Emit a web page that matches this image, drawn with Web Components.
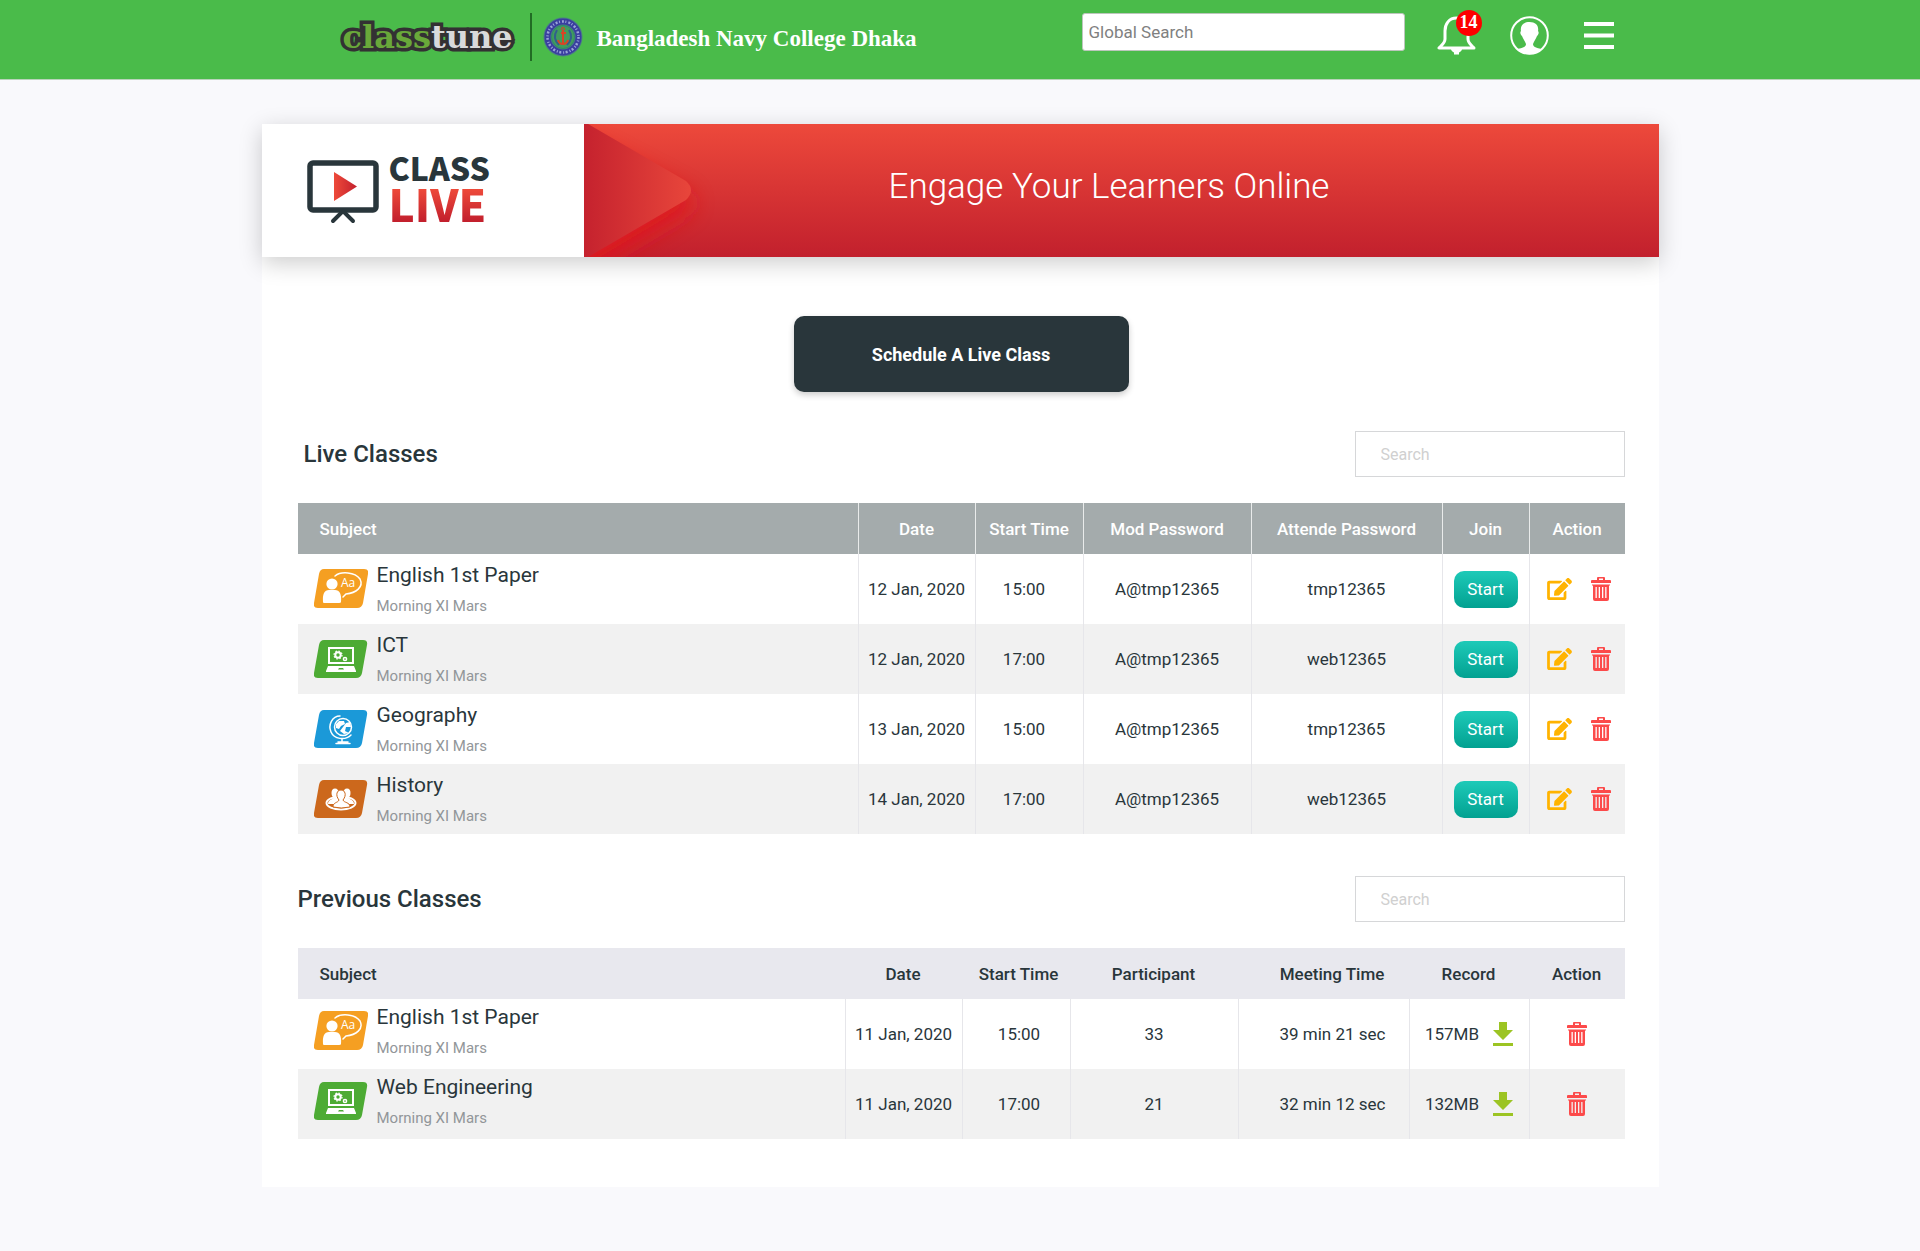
<!DOCTYPE html>
<html lang="en">
<head>
<meta charset="utf-8">
<meta name="viewport" content="width=device-width, initial-scale=1">
<title>Class Live</title>
<style>
  body {
    margin: 0;
    min-height: 100vh;
    background: #f9f9fc;
    color: #29363b;
    font-family: Roboto, "Liberation Sans", sans-serif;
    font-size: 16px;
  }
</style>
</head>
<body>
<site-header college="Bangladesh Navy College Dhaka" notifications="14"></site-header>
<page-panel>
  <live-banner slot="banner">Engage Your Learners Online</live-banner>
  <schedule-button>Schedule A Live Class</schedule-button>
  <class-section heading="Live Classes" kind="live"></class-section>
  <class-section heading="Previous Classes" kind="previous"></class-section>
</page-panel>

<script>
const define = (name, render) => customElements.define(name, class extends HTMLElement {
  connectedCallback() {
    if (this.shadowRoot) return;
    const template = document.createElement('template');
    template.innerHTML = render(this);
    this.attachShadow({ mode: 'open' }).append(template.content.cloneNode(true));
  }
});

const subjectGlyphs = {
  english: `<path fill="#f59f22" d="M10 0H50Q55 0 54 5L49 34Q48 39 43 39H4Q-1 39 0 34L5 5Q6 0 10 0Z"/>
    <g fill="#fff"><circle cx="18" cy="15" r="5.600"/><path d="M9 33q-1-12 6-12h6q7 0 6 12q0 1-2 1H10q-1 0-1-1Z"/></g>
    <path fill="none" stroke="#fff" stroke-width="1.500" stroke-linecap="round" d="M21 7C27 2 41 3 46 10c4 8-4 14-14 15l-3 3"/>
    <text x="27" y="18" font-family="Open Sans, sans-serif" font-size="12" fill="#fff">Aa</text>`,
  laptop: `<path fill="#4dab34" d="M10 1H49Q54 1 53 6L48 34Q47 39 42 39H4Q-1 39 0 34L5 6Q6 1 10 1Z"/>
    <path d="M15 9h24v15H15Z" fill="none" stroke="#fff" stroke-width="2"/>
    <path fill="#fff" fill-rule="evenodd" d="M14 27h26l2 5v1H12v-1Zm11 2-1 1.500h6L29 29Z"/>
    <circle cx="24" cy="16" r="2.700" fill="none" stroke="#fff" stroke-width="2"/>
    <circle cx="24" cy="16" r="4" fill="none" stroke="#fff" stroke-width="1.200" stroke-dasharray="1.600 1.540"/>
    <circle cx="31" cy="20" r="1.600" fill="none" stroke="#fff" stroke-width="1.500"/>`,
  globe: `<path fill="#1b99d8" d="M10 1H49Q54 1 53 6L48 34Q47 39 42 39H4Q-1 39 0 34L5 6Q6 1 10 1Z"/>
    <g fill="none" stroke="#fff" stroke-linecap="round"><circle cx="29" cy="18" r="8.500" stroke-width="1.500"/>
    <path stroke-width="1.500" d="M26 7C18 7 14 16 17 23c3 7 14 9 20 3M24 33h10M28 30v3M22 34.500h14"/></g>
    <path fill="#fff" d="m25 12 5 0 1 3-4 2-2 3-3-1 0-4Zm7 2 4-1 1 5-5 0-1 4 4 2-5 1-4-3 3-4Z"/>`,
  people: `<path fill="#cc681c" d="M10 1H49Q54 1 53 6L48 34Q47 39 42 39H4Q-1 39 0 34L5 6Q6 1 10 1Z"/>
    <ellipse cx="27" cy="24" rx="14.500" ry="6.500" fill="none" stroke="#fff" stroke-width="2"/>
    <g fill="#fff"><ellipse cx="21" cy="14" rx="3.500" ry="4.500"/><ellipse cx="33" cy="14" rx="3.500" ry="4.500"/>
    <path d="M14 25c0-5 5-4 6-7h14c1 3 6 2 6 7Z"/></g>
    <path fill="#fff" stroke="#cc681c" d="M19 28c0-5 5-4 6-7-4-5-2-10 2-10s6 5 2 10c1 3 7 2 7 7q-9 2-17 0Z"/>`
};

define('subject-icon', el => `
  <style>:host { display: block; flex: none; width: 54px; height: 39px; } svg { display: block; }</style>
  <svg width="54" height="39" viewBox="0 0 54 39" aria-hidden="true">${subjectGlyphs[el.getAttribute('name')]}</svg>`);

const actionGlyphs = {
  edit: ['25', '22', '0 0 576 512', '#ffb300', '<path d="M402.600 83.200l90.200 90.200c3.800 3.800 3.800 10 0 13.800L274.400 405.600l-92.800 10.300c-12.400 1.400-22.900-9.100-21.500-21.500l10.300-92.800L388.800 83.200c3.800-3.800 10-3.800 13.800 0zm162-22.900l-48.800-48.800c-15.200-15.200-39.900-15.200-55.200 0l-35.400 35.400c-3.800 3.800-3.800 10 0 13.800l90.200 90.200c3.800 3.800 10 3.800 13.800 0l35.400-35.400c15.200-15.300 15.200-40 0-55.200zM384 346.200V448H64V128h229.800c3.200 0 6.200-1.300 8.500-3.500l40-40c7.600-7.600 2.200-20.500-8.500-20.500H48C21.500 64 0 85.500 0 112v352c0 26.500 21.500 48 48 48h352c26.500 0 48-21.500 48-48V306.200c0-10.700-12.900-16-20.500-8.500l-40 40c-2.200 2.300-3.500 5.300-3.500 8.500z"/>'],
  trash: ['20', '24', '0 0 20 24', '#fc4a4a', '<path fill-rule="evenodd" d="M6 3V1q0-1 1-1h6q1 0 1 1v2h5q1 0 1 1v2H0V4q0-1 1-1Zm2 0h4V1.500H8ZM1 7.500h18v1h-1V22q0 2-2 2H4q-2 0-2-2V8.500H1ZM4.500 10v11h1.300V10Zm3.200 0v11H9V10Zm3.300 0v11h1.300V10Zm3.200 0v11h1.300V10Z"/>'],
  download: ['20', '24', '0 0 20 24', '#9cc423', '<path d="M6 0h8v8h6L10 18 0 8h6ZM0 21h20v3H0Z"/>']
};

define('icon-button', el => {
  const [w, h, box, fill, body] = actionGlyphs[el.getAttribute('name')];
  return `
  <style>
    :host { display: block; flex: none; }
    button { display: block; padding: 0; border: 0; background: none; cursor: pointer; }
    svg { display: block; }
  </style>
  <button type="button" aria-label="${el.getAttribute('name')}"><svg width="${w}" height="${h}" viewBox="${box}" fill="${fill}">${body}</svg></button>`;
});

define('start-button', () => `
  <style>
    :host { display: block; }
    button { width: 64px; height: 37px; padding: 0; border: 0; border-radius: 10px;
      background: linear-gradient(#1ecab8, #02a191); color: #fff; font: 400 17px Roboto, sans-serif; cursor: pointer; }
  </style>
  <button type="button"><slot></slot></button>`);

define('subject-label', el => `
  <style>
    :host { display: flex; gap: 9px; align-items: flex-start; padding-left: 16px; text-align: left; }
    subject-icon { margin-top: 6px; }
    .name { font-size: 21px; line-height: 24px; }
    .group { margin-top: 9px; font-size: 15px; line-height: 20px; color: #929699; }
  </style>
  <subject-icon name="${el.getAttribute('icon')}"></subject-icon>
  <div><div class="name"><slot></slot></div><div class="group">${el.getAttribute('group')}</div></div>`);

const subject = (icon, name) => `<subject-label icon="${icon}" group="Morning XI Mars">${name}</subject-label>`;
const start = '<start-button>Start</start-button>';
const tools = '<div class="tools"><icon-button name="edit"></icon-button><icon-button name="trash"></icon-button></div>';
const remove = '<div class="tools"><icon-button name="trash"></icon-button></div>';
const record = size => `<div class="record">${size}<icon-button name="download"></icon-button></div>`;

const tables = {
  live: {
    widths: [117, 108, 168, 191, 87, 96],
    heads: ['Subject', 'Date', 'Start Time', 'Mod Password', 'Attende Password', 'Join', 'Action'],
    rows: [
      [subject('english', 'English 1st Paper'), '12 Jan, 2020', '15:00', 'A@tmp12365', 'tmp12365', start, tools],
      [subject('laptop', 'ICT'), '12 Jan, 2020', '17:00', 'A@tmp12365', 'web12365', start, tools],
      [subject('globe', 'Geography'), '13 Jan, 2020', '15:00', 'A@tmp12365', 'tmp12365', start, tools],
      [subject('people', 'History'), '14 Jan, 2020', '17:00', 'A@tmp12365', 'web12365', start, tools]
    ]
  },
  previous: {
    widths: [117, 108, 168, 171, 120, 96],
    heads: ['Subject', 'Date', 'Start Time', 'Participant', 'Meeting Time', 'Record', 'Action'],
    rows: [
      [subject('english', 'English 1st Paper'), '11 Jan, 2020', '15:00', '33', '39 min 21 sec', record('157MB'), remove],
      [subject('laptop', 'Web Engineering'), '11 Jan, 2020', '17:00', '21', '32 min 12 sec', record('132MB'), remove]
    ]
  }
};

define('class-table', el => {
  const kind = el.getAttribute('kind');
  const { widths, heads, rows } = tables[kind];
  return `
  <style>
    :host { display: block; }
    table { width: 100%; table-layout: fixed; border-collapse: separate; border-spacing: 0; }
    th { height: 51px; padding: 0; font-size: 17px; font-weight: 500; }
    th:first-child { padding-left: 22px; text-align: left; }
    td { height: 70px; padding: 0; border-left: 1px solid #e6e6ea; box-sizing: border-box; text-align: center; font-size: 17px; }
    td:first-child { border-left: 0; vertical-align: top; }
    tbody tr:nth-child(even) { background: #f1f1f1; }
    .live th { background: #a4abac; color: #fff; border-left: 1px solid #e9ebeb; }
    .live th:first-child { border-left: 0; }
    .live td:first-child { padding-top: 9px; }
    .live td:nth-child(3) { padding-right: 10px; }
    .live td:last-child { padding-left: 3px; }
    .previous th { background: #e8e8ee; }
    .previous td:first-child { padding-top: 6px; }
    .previous :is(th, td):nth-child(3) { padding-left: 6px; }
    .previous :is(th, td):nth-child(5) { padding-left: 18px; }
    .tools { display: flex; justify-content: center; align-items: center; gap: 19px; }
    .record { display: flex; justify-content: center; align-items: center; gap: 14px; }
  </style>
  <table class="${kind}">
    <colgroup><col>${widths.map(w => `<col style="width:${w}px">`).join('')}</colgroup>
    <thead><tr>${heads.map(h => `<th scope="col">${h}</th>`).join('')}</tr></thead>
    <tbody>${rows.map(r => `<tr>${r.map(c => `<td>${c}</td>`).join('')}</tr>`).join('')}</tbody>
  </table>`;
});

define('class-section', el => `
  <style>
    :host { display: block; }
    header { display: flex; justify-content: space-between; align-items: center; margin-bottom: 26px; }
    :host([kind="live"]) h2 { padding-left: 6px; }
    h2 { margin: 0; font-size: 24px; line-height: 28px; font-weight: 500; }
    input { box-sizing: border-box; width: 270px; height: 46px; padding: 0 25px; border: 1px solid #d6d7d9;
      background: #fff; color: #29363b; font: 16px Roboto, sans-serif; }
    input::placeholder { color: #d0d0d0; opacity: 1; }
  </style>
  <header>
    <h2>${el.getAttribute('heading')}</h2>
    <input type="search" placeholder="Search" aria-label="Search ${el.getAttribute('heading')}">
  </header>
  <class-table kind="${el.getAttribute('kind')}"></class-table>`);

define('schedule-button', () => `
  <style>
    :host { display: flex; justify-content: center; }
    button { width: 335px; height: 76px; border: 0; border-radius: 10px; background: #29363b; color: #fff;
      box-shadow: 0 3px 6px rgba(0,0,0,.2); font: 700 18px Roboto, sans-serif; cursor: pointer; }
  </style>
  <button type="button"><slot></slot></button>`);

define('class-logo', () => `
  <style>
    :host { display: flex; gap: 10px; align-items: center; font-family: "Noto Sans CJK JP", sans-serif; font-weight: 900; }
    svg { display: block; margin-top: 3px; }
    .words { padding-bottom: 8px; }
    .top { font-size: 32px; line-height: 32px; color: #29363b; }
    .bottom { font-size: 44px; line-height: 40px; background: linear-gradient(#ee4a3a 15%, #c3202d 95%);
      -webkit-background-clip: text; background-clip: text; color: transparent; }
  </style>
  <svg width="72" height="64" viewBox="0 0 72 64" aria-hidden="true">
    <defs><linearGradient id="play"><stop stop-color="#ee4a3a"/><stop offset="1" stop-color="#c3202d"/></linearGradient></defs>
    <rect x="3" y="3" width="66" height="47" rx="3" fill="none" stroke="#29363b" stroke-width="5.500"/>
    <path d="m26 61 10-10 10 10" fill="none" stroke="#29363b" stroke-width="4" stroke-linecap="round"/>
    <path d="M27 12v29l23-14.500Z" fill="url(#play)"/>
  </svg>
  <div class="words"><div class="top">CLASS</div><div class="bottom">LIVE</div></div>`);

define('live-banner', () => `
  <style>
    :host { display: flex; height: 133px; background: #fff; box-shadow: 0 6px 22px rgba(0,0,0,.2); }
    .brand { flex: none; display: flex; align-items: center; box-sizing: border-box; width: 322px; padding-left: 45px; }
    .message { flex: 1; display: flex; align-items: center; background: linear-gradient(#ed493b, #c2202d); }
    svg { display: block; flex: none; }
    h1 { flex: 1; margin: 0; padding: 0 184px 7px 0; text-align: center; color: #fff; font-size: 35px; line-height: 40px; font-weight: 300; }
  </style>
  <div class="brand"><class-logo></class-logo></div>
  <div class="message">
    <svg width="160" height="133" viewBox="0 0 160 133" aria-hidden="true">
      <defs>
        <linearGradient id="arrow"><stop stop-color="#c5222e"/><stop offset="1" stop-color="#e8463b"/></linearGradient>
        <filter id="soft" x="-50%" y="-50%" width="200%" height="200%"><feGaussianBlur stdDeviation="11"/></filter>
      </defs>
      <path d="M-30 0 104 70Q114 78 104 88L-30 168Z" fill="#e0141c" opacity=".85" filter="url(#soft)"/>
      <path d="M0 0H4L102 57Q112 66 102 76L4 133H0Z" fill="url(#arrow)"/>
    </svg>
    <h1><slot></slot></h1>
  </div>`);

define('page-panel', () => `
  <style>
    :host { display: block; box-sizing: border-box; max-width: 1397px; margin: 44px auto 0; background: #fff; }
    .content { display: flex; flex-direction: column; padding: 59px 34px 48px 36px; gap: 42px; }
    ::slotted(schedule-button) { margin-bottom: -3px; }
  </style>
  <slot name="banner"></slot>
  <div class="content"><slot></slot></div>`);

define('site-header', el => `
  <style>
    :host { display: block; background: #4abb4a; border-bottom: 1px solid #b9d3bb; }
    .bar { display: flex; align-items: center; box-sizing: border-box; max-width: 1397px; height: 79px; margin: 0 auto; padding: 0 45px 8px 78px; }
    a { box-sizing: border-box; flex: none; width: 175px; margin-top: 3px; padding-left: 3px; text-decoration: none; white-space: nowrap;
      font: 700 32px "DejaVu Serif", serif; line-height: 40px; color: #69a83a; -webkit-text-stroke: 7px #333133; paint-order: stroke fill; }
    a b { color: #d9dadb; }
    .rule { flex: none; width: 2px; height: 48px; margin: 3px 11px 0 15px; background: #216c24; }
    .school { margin: 7px 0 0 14px; color: #fff; font: 700 23px "Liberation Serif", serif; line-height: 28px; white-space: nowrap; }
    svg { display: block; flex: none; }
    .emblem { margin-top: 3px; }
    .tools { display: flex; align-items: center; margin-left: auto; }
    input { box-sizing: border-box; width: 323px; height: 38px; margin: 0 32px 7px 0; padding: 0 6px; border: 1px solid #bcc6bc; border-radius: 3px;
      background: #fff; color: #333; font: 17px Roboto, sans-serif; }
    input::placeholder { color: #808080; opacity: 1; }
    button { position: relative; padding: 0; border: 0; background: none; cursor: pointer; }
    .bell { margin-right: 34px; }
    .user { margin-right: 35px; }
    .count { position: absolute; top: -6px; right: -6px; width: 26px; height: 26px; border-radius: 50%; background: #fe0000; color: #fff;
      font: 700 18px "Liberation Serif", serif; line-height: 24px; text-align: center; }
  </style>
  <div class="bar">
    <a href="#">class<b>tune</b></a>
    <div class="rule"></div>
    <svg class="emblem" width="40" height="40" viewBox="0 0 40 40" aria-hidden="true">
      <circle cx="20" cy="20" r="19.500" fill="#4b7d86"/>
      <circle cx="20" cy="20" r="15.500" fill="none" stroke="#3a3e9f" stroke-width="6"/>
      <circle cx="20" cy="20" r="15.500" fill="none" stroke="#99a5d8" stroke-width="2.500" stroke-dasharray="2 1.500 1 2"/>
      <circle cx="20" cy="20" r="11.500" fill="#419c5d" stroke="#2f8a68"/>
      <path d="M14 13q-5 8 2 15M26 13q5 8-2 15" fill="none" stroke="#31608c" stroke-width="2"/>
      <path d="M20 13v14m-5-4q1 4 5 4t5-4m-7-7h5" fill="none" stroke="#d84425" stroke-width="2"/>
      <circle cx="20" cy="12" r="1.500" fill="none" stroke="#d84425"/>
    </svg>
    <div class="school">${el.getAttribute('college')}</div>
    <div class="tools">
      <input type="search" placeholder="Global Search" aria-label="Global Search">
      <button class="bell" type="button" aria-label="Notifications">
        <svg width="39" height="39" viewBox="0 0 39 39" aria-hidden="true">
          <path d="M19.500 2C12 2 8 8 8 15v8c0 4-3 6-6 9h35c-3-3-6-5-6-9v-8C31 8 27 2 19.500 2Z" fill="none" stroke="#fff" stroke-width="3" stroke-linejoin="round"/>
          <path d="M14 33h11c0 2-2 3-3 3.500v2h-5v-2c-1-.5-3-1.500-3-3.500Z" fill="#fff"/>
        </svg>
        <span class="count">${el.getAttribute('notifications')}</span>
      </button>
      <button class="user" type="button" aria-label="Account">
        <svg width="39" height="39" viewBox="0 0 39 39" aria-hidden="true">
          <circle cx="19.500" cy="19.500" r="18.300" fill="none" stroke="#fff" stroke-width="2"/>
          <path fill="#fff" d="M19.500 6C13 6 10 10 11 15c-1 1-1 3 1 5 1 3 3 5 4 8 0 3-4 4-8 5 6 7 17 7 23 0-4-1-8-2-8-5 1-3 3-5 4-8 2-2 2-4 1-5 1-5-2-9-8.500-9Z"/>
        </svg>
      </button>
      <button type="button" aria-label="Menu">
        <svg width="30" height="27" viewBox="0 0 30 27" fill="#fff" aria-hidden="true"><path d="M0 0h30v4H0Zm0 11.500h30v4H0ZM0 23h30v4H0Z"/></svg>
      </button>
    </div>
  </div>`);
</script>
</body>
</html>
